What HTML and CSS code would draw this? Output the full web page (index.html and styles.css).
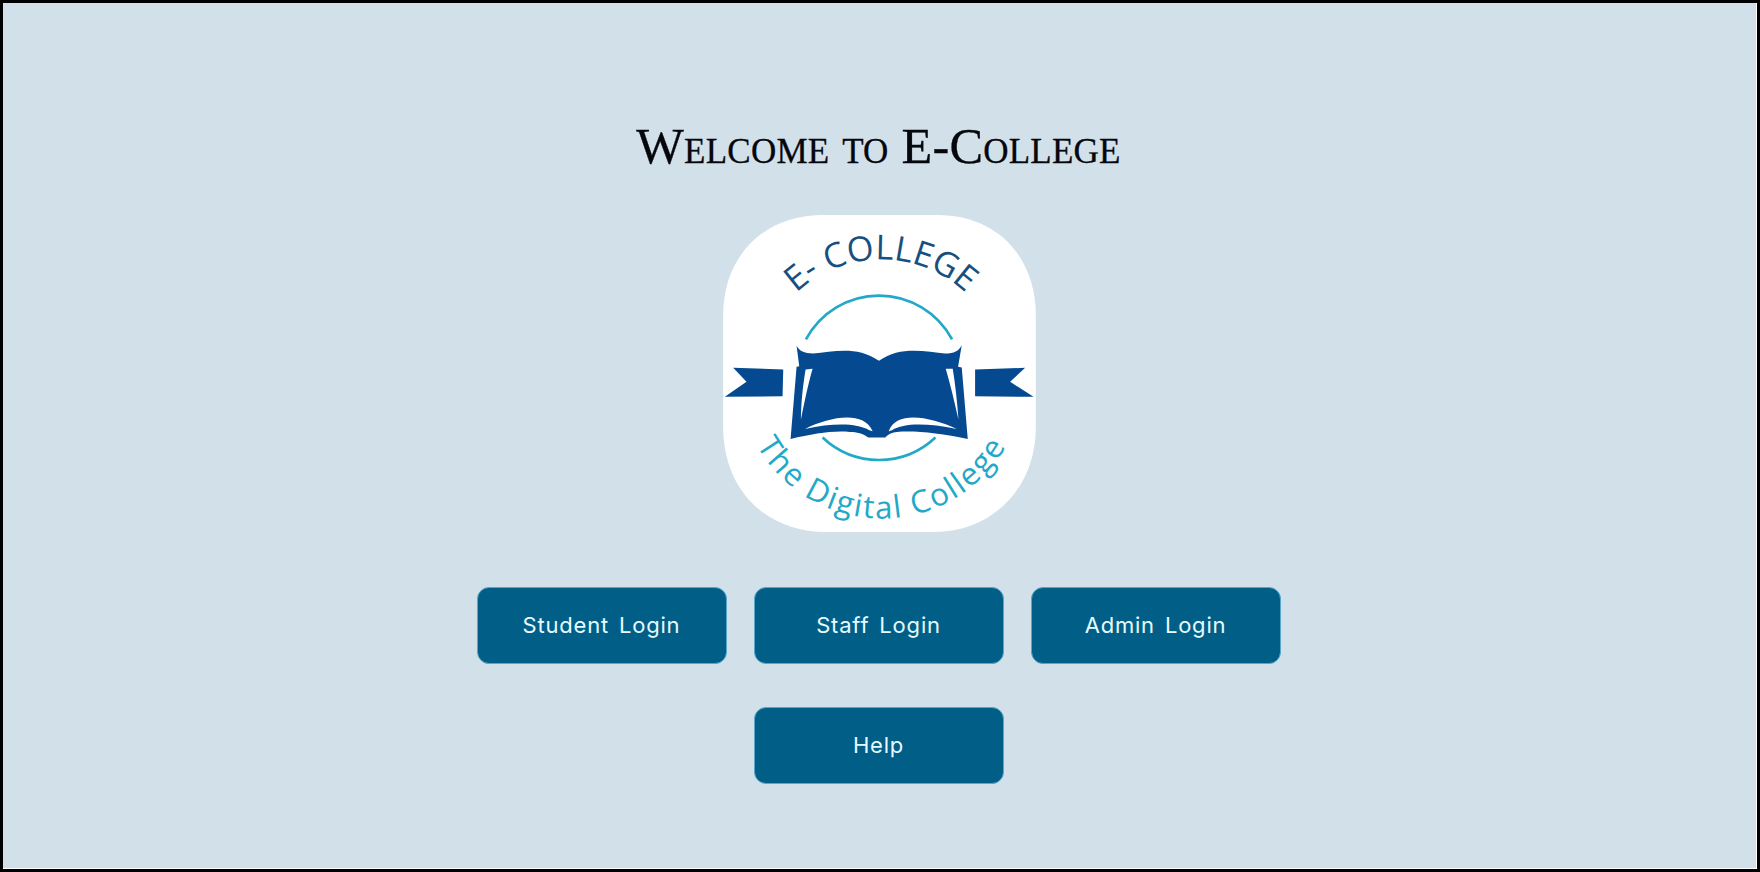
FILE: index.html
```html
<!DOCTYPE html>
<html lang="en">
<head>
<meta charset="utf-8">
<title>E-College</title>
<link rel="stylesheet" href="styles.css">
</head>
<body>
<main class="frame">
  <div class="screen">
    <h1 class="title">Welcome to E-College</h1>
    <svg class="logo" viewBox="70 45 937 950" role="img" aria-label="E-College logo">
      <path class="logo-bg" d="M370 45 L710 45 C900 45 1007 180 1007 345 L1007 680 C1007 860 880 995 700 995 L380 995 C190 995 70 860 70 680 L70 345 C70 170 190 45 370 45 Z"/>
      <path class="logo-ring" d="M318 418 A248 248 0 0 1 756 418"/>
      <path class="logo-ring" d="M368 712 A246 246 0 0 0 706 712"/>
      <defs>
        <path id="arc-top" d="M203 401 A371 371 0 0 1 883 401"/>
        <path id="arc-bottom" d="M130 637 A430 430 0 0 0 960 637"/>
      </defs>
      <text class="logo-name"><textPath href="#arc-top" startOffset="50%" text-anchor="middle">E- COLLEGE</textPath></text>
      <text class="logo-motto"><textPath href="#arc-bottom" startOffset="50%" text-anchor="middle">The Digital College</textPath></text>
      <path class="logo-blue" d="M100 503 L250 508 L248 588 L75 590 L140 545 Z"/>
      <path class="logo-blue" d="M825 508 L975 503 L930 545 L1000 590 L825 588 Z"/>
      <path class="logo-blue" d="M290 437 C298 452 312 460 340 460 C400 455 470 435 537 482 C600 435 680 455 735 460 C762 460 776 452 785 435 L774 500 L785 502 L803 716 C720 698 640 690 590 695 C578 697 565 700 556 712 L505 712 C490 700 470 695 450 695 C400 690 340 700 272 716 L290 500 L298 498 Z"/>
      <path class="logo-page" d="M317 508 L338 506 C325 550 315 600 303 658 C303 610 309 555 317 508 Z"/>
      <path class="logo-page" d="M737 506 L758 506 C766 555 772 610 775 658 C762 600 750 550 737 506 Z"/>
      <path class="logo-page" d="M315 686 C390 650 490 630 518 693 L508 690 C470 668 400 668 315 686 Z"/>
      <path class="logo-page" d="M770 686 C690 650 590 630 566 693 L576 690 C610 668 680 668 770 686 Z"/>
    </svg>
    <nav class="actions">
      <a class="btn" href="#">Student Login</a>
      <a class="btn" href="#">Staff Login</a>
      <a class="btn" href="#">Admin Login</a>
      <a class="btn btn-help" href="#">Help</a>
    </nav>
  </div>
</main>
</body>
</html>
```
FILE: styles.css
```css
* { box-sizing: border-box; }
html, body { margin: 0; height: 100%; }
.frame {
  height: 872px;
  border: 3px solid #000;
}
.screen {
  height: 100%;
  background: #d2e0ea;
  border-right: 1px solid #fff;
  border-bottom: 1px solid #fff;
  display: flex;
  flex-direction: column;
  align-items: center;
  padding: 115px 2px 0 0;
}
.title {
  margin: 0;
  font-family: "Liberation Serif", serif;
  font-variant: small-caps;
  font-weight: 400;
  font-size: 50.4px;
  letter-spacing: 0.22px;
  line-height: 56px;
  color: #05070c;
  -webkit-text-stroke: 0.3px #05070c;
}
.logo {
  display: block;
  width: 313px;
  height: 317px;
  margin: 41px 0 0 2px;
}
.logo-bg { fill: #fff; }
.logo-ring { fill: none; stroke: #22a8c8; stroke-width: 8; }
.logo-blue { fill: #054a91; }
.logo-page { fill: #fff; }
.logo-name {
  font-family: "Open Sans", sans-serif;
  font-size: 103px;
  fill: #17507f;
}
.logo-motto {
  font-family: "Open Sans", sans-serif;
  font-size: 94px;
  letter-spacing: 5.5px;
  fill: #22a8c8;
}
.actions {
  display: grid;
  grid-template-columns: repeat(3, 250px);
  grid-auto-rows: 77px;
  column-gap: 27px;
  row-gap: 43px;
  margin-top: 55px;
}
.btn {
  display: flex;
  align-items: center;
  justify-content: center;
  border: 1px solid #5aa5cc;
  border-radius: 12px;
  background: #015f87;
  color: #e6fbff;
  font-family: "Inter", sans-serif;
  font-size: 22px;
  letter-spacing: 0.8px;
  word-spacing: 3px;
  padding-bottom: 2px;
  text-decoration: none;
}
.btn-help { grid-column: 2; }
```
